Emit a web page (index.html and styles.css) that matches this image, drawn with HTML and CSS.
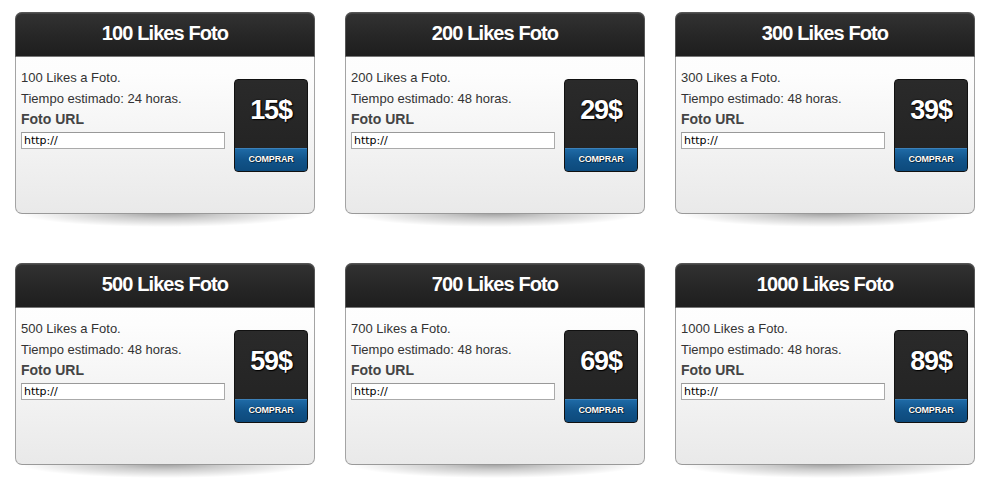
FILE: index.html
```html
<!DOCTYPE html>
<html>
<head>
<meta charset="utf-8">
<link rel="stylesheet" href="styles.css">
</head>
<body>
<div class="grid">
  <div class="card">
    <div class="card-head">100 Likes Foto</div>
    <div class="card-body">
      <div class="info">
        <p>100 Likes a Foto.</p>
        <p>Tiempo estimado: 24 horas.</p>
        <p class="label">Foto URL</p>
        <input class="url" type="text" value="http://">
      </div>
      <div class="price">
        <div class="amount">15$</div>
        <div class="buy">COMPRAR</div>
      </div>
    </div>
  </div>
  <div class="card">
    <div class="card-head">200 Likes Foto</div>
    <div class="card-body">
      <div class="info">
        <p>200 Likes a Foto.</p>
        <p>Tiempo estimado: 48 horas.</p>
        <p class="label">Foto URL</p>
        <input class="url" type="text" value="http://">
      </div>
      <div class="price">
        <div class="amount">29$</div>
        <div class="buy">COMPRAR</div>
      </div>
    </div>
  </div>
  <div class="card">
    <div class="card-head">300 Likes Foto</div>
    <div class="card-body">
      <div class="info">
        <p>300 Likes a Foto.</p>
        <p>Tiempo estimado: 48 horas.</p>
        <p class="label">Foto URL</p>
        <input class="url" type="text" value="http://">
      </div>
      <div class="price">
        <div class="amount">39$</div>
        <div class="buy">COMPRAR</div>
      </div>
    </div>
  </div>
  <div class="card">
    <div class="card-head">500 Likes Foto</div>
    <div class="card-body">
      <div class="info">
        <p>500 Likes a Foto.</p>
        <p>Tiempo estimado: 48 horas.</p>
        <p class="label">Foto URL</p>
        <input class="url" type="text" value="http://">
      </div>
      <div class="price">
        <div class="amount">59$</div>
        <div class="buy">COMPRAR</div>
      </div>
    </div>
  </div>
  <div class="card">
    <div class="card-head">700 Likes Foto</div>
    <div class="card-body">
      <div class="info">
        <p>700 Likes a Foto.</p>
        <p>Tiempo estimado: 48 horas.</p>
        <p class="label">Foto URL</p>
        <input class="url" type="text" value="http://">
      </div>
      <div class="price">
        <div class="amount">69$</div>
        <div class="buy">COMPRAR</div>
      </div>
    </div>
  </div>
  <div class="card">
    <div class="card-head">1000 Likes Foto</div>
    <div class="card-body">
      <div class="info">
        <p>1000 Likes a Foto.</p>
        <p>Tiempo estimado: 48 horas.</p>
        <p class="label">Foto URL</p>
        <input class="url" type="text" value="http://">
      </div>
      <div class="price">
        <div class="amount">89$</div>
        <div class="buy">COMPRAR</div>
      </div>
    </div>
  </div>
</div>
</body>
</html>
```
FILE: styles.css
```css
html {
  background: #fff;
}
html, body {
  margin: 0;
  padding: 0;
}
body {
  font-family: "Liberation Sans", Arial, sans-serif;
  color: #333;
}
.grid {
  display: grid;
  grid-template-columns: repeat(3, 300px);
  column-gap: 30px;
  row-gap: 49px;
  padding: 12px 0 20px 15px;
}
.card {
  position: relative;
  height: 202px;
  display: flex;
  flex-direction: column;
  border: 1px solid #a4a4a4;
  border-bottom-color: #999;
  border-radius: 7px;
  background: linear-gradient(#fff 0%, #fdfdfd 30%, #e9e9e9 100%);
  box-sizing: border-box;
}
.card::after {
  content: "";
  position: absolute;
  left: 3%;
  right: 3%;
  bottom: -14px;
  height: 14px;
  background: radial-gradient(ellipse 52% 100% at 50% 0%, rgba(0,0,0,0.38) 0%, rgba(0,0,0,0.2) 40%, rgba(0,0,0,0) 100%);
  z-index: -1;
}
.card-head {
  height: 43px;
  margin: -1px -1px 0 -1px;
  border: 1px solid #555;
  border-bottom: 1px solid #777;
  border-radius: 7px 7px 0 0;
  background: linear-gradient(#323232 0%, #262626 55%, #1e1e1e 100%);
  color: #fff;
  font-weight: bold;
  font-size: 20px;
  letter-spacing: -0.9px;
  line-height: 40px;
  text-align: center;
  box-shadow: inset 0 1px 0 #444;
}
.card-body {
  display: flex;
  padding: 10px 5px 0 5px;
  gap: 9px;
}
.info {
  flex: 1;
}
.info p {
  margin: 0;
  font-size: 13px;
  line-height: 21px;
  color: #333;
}
.info p.label {
  font-weight: bold;
  font-size: 14px;
  color: #444;
}
.url {
  display: block;
  box-sizing: border-box;
  width: 204px;
  height: 17px;
  margin-top: 2px;
  padding: 0 2px;
  border: 1px solid #aaa;
  border-top-color: #999;
  font-family: "DejaVu Sans", Verdana, sans-serif;
  font-size: 11px;
  color: #000;
  background: #fff;
  outline: none;
}
.price {
  width: 75px;
  height: 93px;
  margin-top: 12px;
  margin-right: 1px;
  display: flex;
  flex-direction: column;
  border-radius: 4px;
  background: linear-gradient(#2a2a2a, #222);
  border: 1px solid #111;
  box-sizing: border-box;
  overflow: hidden;
}
.amount {
  flex: 1;
  display: flex;
  align-items: center;
  justify-content: center;
  color: #fff;
  font-weight: bold;
  font-size: 27px;
  letter-spacing: -1.2px;
  text-shadow: 0 0 2px #000, 1px 1px 1px #000;
  padding-bottom: 8px;
}
.buy {
  height: 22px;
  line-height: 21px;
  text-align: center;
  color: #fff;
  font-weight: bold;
  font-size: 9px;
  letter-spacing: -0.2px;
  background: linear-gradient(#1e6aa6 0%, #115389 50%, #0d4a7c 100%);
  border-top: 1px solid #3c80b8;
  text-shadow: 0 0 1px #000, 1px 1px 0 #062e50;
}
```
